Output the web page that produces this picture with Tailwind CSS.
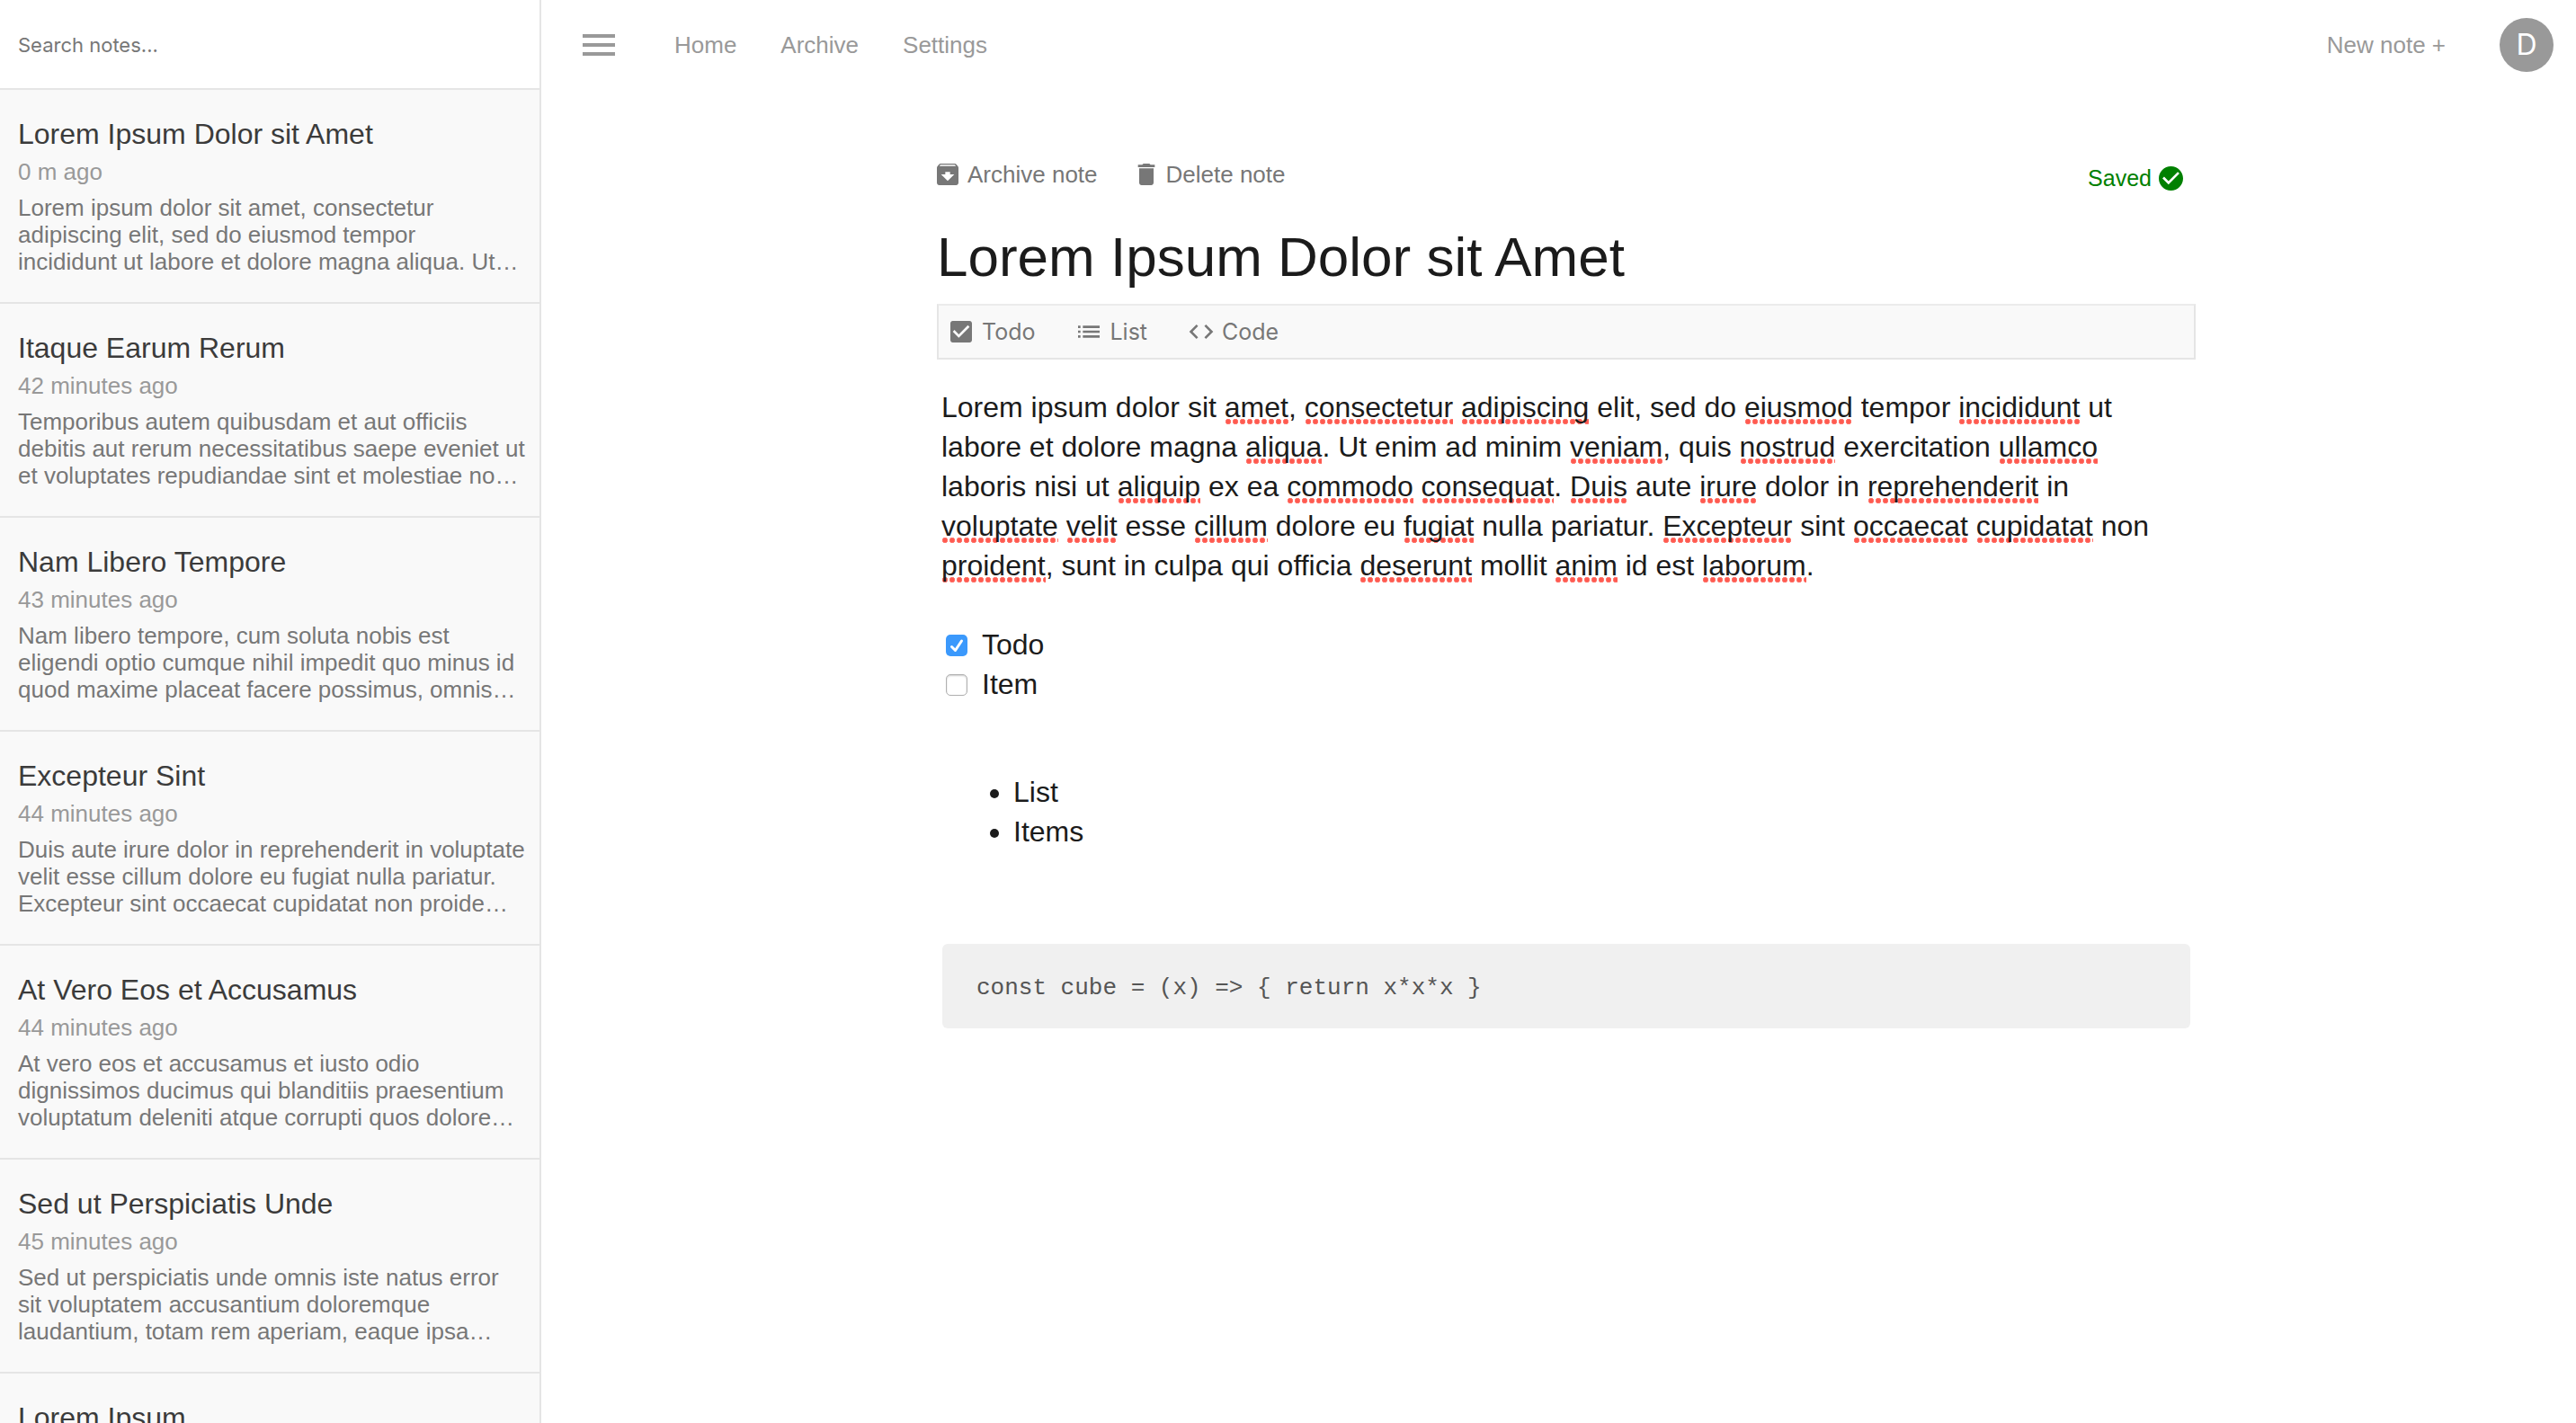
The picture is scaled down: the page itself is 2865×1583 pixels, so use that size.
<!DOCTYPE html>
<html lang="en">
<head>
<meta charset="utf-8">
<meta name="viewport" content="width=device-width, initial-scale=1">
<title>Notes</title>
<script src="https://cdn.jsdelivr.net/npm/@tailwindcss/browser@4"></script>
</head>
<body class="flex h-screen overflow-hidden bg-white font-['Liberation_Sans',Arial,sans-serif] text-[#1b1b1b]">

<aside class="flex w-[602px] shrink-0 flex-col overflow-hidden border-r-2 border-[#e5e5e5] bg-[#f9f9f9]">
  <div class="h-[100px] shrink-0 border-b-2 border-[#e5e5e5] bg-white">
    <input type="search" aria-label="Search notes" placeholder="Search notes..." class="h-full w-full px-5 pt-[2px] font-[Inter,sans-serif] text-[22px] outline-none placeholder:text-[#777]">
  </div>
  <ul id="notes" class="min-h-0 flex-1 overflow-hidden whitespace-nowrap text-[26px] leading-[30px]"></ul>
</aside>

<div class="flex min-w-0 flex-1 flex-col">
  <header class="flex h-[100px] shrink-0 items-center pr-[25px] pl-10 text-[26px] leading-8 text-[#999]">
    <button type="button" aria-label="Toggle sidebar" class="mr-[60px]">
      <svg viewBox="0 0 24 24" class="size-12" fill="currentColor"><path d="M3 18h18v-2H3v2zm0-5h18v-2H3v2zm0-7v2h18V6H3z"/></svg>
    </button>
    <nav class="flex gap-[49px]">
      <a href="#home">Home</a>
      <a href="#archive">Archive</a>
      <a href="#settings">Settings</a>
    </nav>
    <button type="button" class="mr-[60px] ml-auto">New note +</button>
    <button type="button" aria-label="Account" class="flex size-[60px] items-center justify-center rounded-full bg-[#999] font-[Inter,sans-serif] text-[32px] text-white">D</button>
  </header>

  <main class="flex flex-1 justify-center overflow-hidden pl-[17px]">
    <article class="w-full max-w-[1400px] pt-[78px]">
      <div class="flex h-8 items-start gap-[42px] text-[26px] leading-8 text-[#777]">
        <button type="button" class="flex items-center gap-[10px]">
          <svg viewBox="3 3 18 18" class="size-6" fill="currentColor"><path d="M20.54 5.23l-1.39-1.68C18.88 3.21 18.47 3 18 3H6c-.47 0-.88.21-1.16.55L3.46 5.23C3.17 5.57 3 6.02 3 6.5V19c0 1.1.9 2 2 2h14c1.1 0 2-.9 2-2V6.5c0-.48-.17-.93-.46-1.27zM12 17.5L6.5 12H10v-2h4v2h3.500L12 17.5zM5.120 5l.81-1h12l.94 1H5.120z"/></svg>
          Archive note
        </button>
        <button type="button" class="flex items-center gap-[10px]">
          <svg viewBox="3 3 18 18" class="size-6" fill="currentColor"><path d="M6 19c0 1.100.9 2 2 2h8c1.100 0 2-.9 2-2V7H6v12zM19 4h-3.500l-1-1h-5l-1 1H5v2h14V4z"/></svg>
          Delete note
        </button>
        <p role="status" class="mt-1 mr-[14px] ml-auto flex items-center gap-2 text-[25px] text-[#008000]">
          Saved
          <svg viewBox="2 2 20 20" class="size-[27px]" fill="currentColor"><path d="M12 2C6.480 2 2 6.480 2 12s4.480 10 10 10 10-4.480 10-10S17.520 2 12 2zm-2 15l-5-5 1.410-1.410L10 14.170l7.590-7.590L19 8l-9 9z"/></svg>
        </p>
      </div>

      <input type="text" aria-label="Note title" value="Lorem Ipsum Dolor sit Amet" class="mt-10 mb-4 block h-[72px] w-full text-[62px] leading-[72px] outline-none">

      <div role="toolbar" aria-label="Insert" class="flex h-[62px] items-center gap-12 border-2 border-[#e5e5e5] border-t-[#ebebeb] bg-[#f9f9f9] px-[13px] font-[Inter,sans-serif] text-[25px] leading-8 text-[#777]">
        <button type="button" class="flex items-center gap-[11px]">
          <svg viewBox="3 3 18 18" class="size-6" fill="currentColor"><path d="M19 3H5c-1.110 0-2 .9-2 2v14c0 1.100.89 2 2 2h14c1.110 0 2-.9 2-2V5c0-1.100-.89-2-2-2zm-9 14l-5-5 1.410-1.410L10 14.170l7.590-7.590L19 8l-9 9z"/></svg>
          Todo
        </button>
        <button type="button" class="flex items-center gap-[11px]">
          <svg viewBox="3 3 18 18" class="size-6" fill="currentColor"><path d="M3 13h2v-2H3v2zm0 4h2v-2H3v2zm0-8h2V7H3v2zm4 4h14v-2H7v2zm0 4h14v-2H7v2zM7 7v2h14V7H7z"/></svg>
          List
        </button>
        <button type="button" class="flex items-center gap-[11px]">
          <svg viewBox="3 3 18 18" class="size-6 overflow-visible" fill="currentColor"><path d="M9.400 16.600L4.800 12l4.600-4.600L8 6l-6 6 6 6 1.400-1.400zm5.200 0l4.600-4.600-4.600-4.600L16 6l6 6-6 6-1.400-1.400z"/></svg>
          Code
        </button>
      </div>

      <div class="px-[5px] pt-[31px] text-[32px] leading-[44px] [&_u]:bg-[radial-gradient(circle_at_center,#ff5a50_2px,#ff8a82_3px,transparent_3px)] [&_u]:bg-[length:8px_6px] [&_u]:bg-bottom-left [&_u]:bg-repeat-x [&_u]:pb-px [&_u]:no-underline">
        <p>Lorem ipsum dolor sit <u>amet</u>, <u>consectetur</u> <u>adipiscing</u> elit, sed do <u>eiusmod</u> tempor <u>incididunt</u> ut<br>
        labore et dolore magna <u>aliqua</u>. Ut enim ad minim <u>veniam</u>, quis <u>nostrud</u> exercitation <u>ullamco</u><br>
        laboris nisi ut <u>aliquip</u> ex ea <u>commodo</u> <u>consequat</u>. <u>Duis</u> aute <u>irure</u> dolor in <u>reprehenderit</u> in<br>
        <u>voluptate</u> <u>velit</u> esse <u>cillum</u> dolore eu <u>fugiat</u> nulla pariatur. <u>Excepteur</u> sint <u>occaecat</u> <u>cupidatat</u> non<br>
        <u>proident</u>, sunt in culpa qui officia <u>deserunt</u> mollit <u>anim</u> id est <u>laborum</u>.</p>

        <div class="mt-11 px-[5px]">
          <label class="flex h-11 items-center gap-4">
            <span class="mt-[2px] grid size-6">
              <input type="checkbox" checked class="peer col-start-1 row-start-1 size-6 appearance-none rounded-[5px] border border-[#b0b0b0] bg-white checked:border-0 checked:bg-[#3b99fc]">
              <svg viewBox="0 0 24 24" class="pointer-events-none invisible col-start-1 row-start-1 size-6 peer-checked:visible" fill="none" stroke="#fff" stroke-width="3" stroke-linecap="round" stroke-linejoin="round"><path d="M6.500 13.500l4 4L17.500 7"/></svg>
            </span>
            Todo
          </label>
          <label class="flex h-11 items-center gap-4">
            <span class="mt-[2px] grid size-6">
              <input type="checkbox" class="peer col-start-1 row-start-1 size-6 appearance-none rounded-[5px] border border-[#b0b0b0] bg-white shadow-[inset_0_1px_2px_#ccc] checked:border-0 checked:bg-[#3b99fc]">
              <svg viewBox="0 0 24 24" class="pointer-events-none invisible col-start-1 row-start-1 size-6 peer-checked:visible" fill="none" stroke="#fff" stroke-width="3" stroke-linecap="round" stroke-linejoin="round"><path d="M6.500 13.500l4 4L17.500 7"/></svg>
            </span>
            Item
          </label>
        </div>

        <ul class="mt-[76px] list-disc pl-20">
          <li>List</li>
          <li>Items</li>
        </ul>

        <pre class="mx-px mt-[103px] rounded-md bg-[#f0f0f0] px-[38px] pt-[34px] pb-[30px] font-['Liberation_Mono','Courier_New',monospace] text-[26px] leading-[30px] text-[#555]"><code class="font-['Liberation_Mono','Courier_New',monospace]">const cube = (x) =&gt; { return x*x*x }</code></pre>
      </div>
    </article>
  </main>
</div>

<script>
const notes = [
  ["Lorem Ipsum Dolor sit Amet", "0 m ago", "Lorem ipsum dolor sit amet, consectetur<br>adipiscing elit, sed do eiusmod tempor<br>incididunt ut labore et dolore magna aliqua. Ut…"],
  ["Itaque Earum Rerum", "42 minutes ago", "Temporibus autem quibusdam et aut officiis<br>debitis aut rerum necessitatibus saepe eveniet ut<br>et voluptates repudiandae sint et molestiae no…"],
  ["Nam Libero Tempore", "43 minutes ago", "Nam libero tempore, cum soluta nobis est<br>eligendi optio cumque nihil impedit quo minus id<br>quod maxime placeat facere possimus, omnis…"],
  ["Excepteur Sint", "44 minutes ago", "Duis aute irure dolor in reprehenderit in voluptate<br>velit esse cillum dolore eu fugiat nulla pariatur.<br>Excepteur sint occaecat cupidatat non proide…"],
  ["At Vero Eos et Accusamus", "44 minutes ago", "At vero eos et accusamus et iusto odio<br>dignissimos ducimus qui blanditiis praesentium<br>voluptatum deleniti atque corrupti quos dolore…"],
  ["Sed ut Perspiciatis Unde", "45 minutes ago", "Sed ut perspiciatis unde omnis iste natus error<br>sit voluptatem accusantium doloremque<br>laudantium, totam rem aperiam, eaque ipsa…"],
  ["Lorem Ipsum", "", ""]
];
document.getElementById("notes").innerHTML = notes.map(([title, time, text]) => `
  <li class="border-b-2 border-[#e5e5e5] pt-[30px] pr-1 pb-[30px] pl-5">
    <h2 class="text-[32px] leading-[38px] text-[#3b3b3b]">${title}</h2>
    <p class="mt-2 text-[#999]">${time}</p>
    <p class="mt-[10px] text-[#777]">${text}</p>
  </li>`).join("");
</script>
</body>
</html>
